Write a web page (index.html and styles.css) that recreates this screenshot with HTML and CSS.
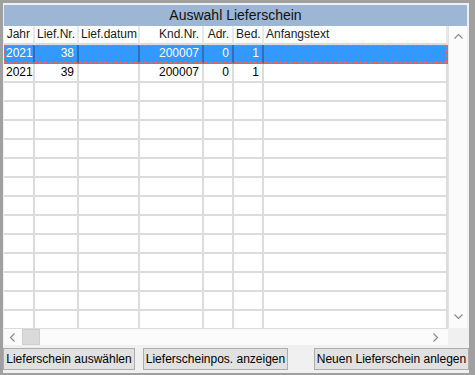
FILE: index.html
```html
<!DOCTYPE html>
<html lang="de">
<head>
  <meta charset="UTF-8" />
  <title>Auswahl Lieferschein</title>
  <link rel="stylesheet" href="styles.css">
</head>
<body>
  <div class="fenster">
    <div class="titel">Auswahl Lieferschein</div>

    <div class="liste">
      <div class="tabelle">
        <div class="zeile kopf">
          <div class="zelle c-jahr num">Jahr</div>
          <div class="zelle c-nr num">Lief.Nr.</div>
          <div class="zelle c-dat">Lief.datum</div>
          <div class="zelle c-knd num">Knd.Nr.</div>
          <div class="zelle c-adr num">Adr.</div>
          <div class="zelle c-bed num">Bed.</div>
          <div class="zelle c-text">Anfangstext</div>
        </div>
        <div class="zeile gewaehlt">
          <div class="zelle c-jahr num">2021</div>
          <div class="zelle c-nr num">38</div>
          <div class="zelle c-dat"></div>
          <div class="zelle c-knd num">200007</div>
          <div class="zelle c-adr num">0</div>
          <div class="zelle c-bed num">1</div>
          <div class="zelle c-text"></div>
        </div>
        <div class="zeile">
          <div class="zelle c-jahr num">2021</div>
          <div class="zelle c-nr num">39</div>
          <div class="zelle c-dat"></div>
          <div class="zelle c-knd num">200007</div>
          <div class="zelle c-adr num">0</div>
          <div class="zelle c-bed num">1</div>
          <div class="zelle c-text"></div>
        </div>
        <div class="zeile"><div class="zelle c-jahr"></div><div class="zelle c-nr"></div><div class="zelle c-dat"></div><div class="zelle c-knd"></div><div class="zelle c-adr"></div><div class="zelle c-bed"></div><div class="zelle c-text"></div></div>
        <div class="zeile"><div class="zelle c-jahr"></div><div class="zelle c-nr"></div><div class="zelle c-dat"></div><div class="zelle c-knd"></div><div class="zelle c-adr"></div><div class="zelle c-bed"></div><div class="zelle c-text"></div></div>
        <div class="zeile"><div class="zelle c-jahr"></div><div class="zelle c-nr"></div><div class="zelle c-dat"></div><div class="zelle c-knd"></div><div class="zelle c-adr"></div><div class="zelle c-bed"></div><div class="zelle c-text"></div></div>
        <div class="zeile"><div class="zelle c-jahr"></div><div class="zelle c-nr"></div><div class="zelle c-dat"></div><div class="zelle c-knd"></div><div class="zelle c-adr"></div><div class="zelle c-bed"></div><div class="zelle c-text"></div></div>
        <div class="zeile"><div class="zelle c-jahr"></div><div class="zelle c-nr"></div><div class="zelle c-dat"></div><div class="zelle c-knd"></div><div class="zelle c-adr"></div><div class="zelle c-bed"></div><div class="zelle c-text"></div></div>
        <div class="zeile"><div class="zelle c-jahr"></div><div class="zelle c-nr"></div><div class="zelle c-dat"></div><div class="zelle c-knd"></div><div class="zelle c-adr"></div><div class="zelle c-bed"></div><div class="zelle c-text"></div></div>
        <div class="zeile"><div class="zelle c-jahr"></div><div class="zelle c-nr"></div><div class="zelle c-dat"></div><div class="zelle c-knd"></div><div class="zelle c-adr"></div><div class="zelle c-bed"></div><div class="zelle c-text"></div></div>
        <div class="zeile"><div class="zelle c-jahr"></div><div class="zelle c-nr"></div><div class="zelle c-dat"></div><div class="zelle c-knd"></div><div class="zelle c-adr"></div><div class="zelle c-bed"></div><div class="zelle c-text"></div></div>
        <div class="zeile"><div class="zelle c-jahr"></div><div class="zelle c-nr"></div><div class="zelle c-dat"></div><div class="zelle c-knd"></div><div class="zelle c-adr"></div><div class="zelle c-bed"></div><div class="zelle c-text"></div></div>
        <div class="zeile"><div class="zelle c-jahr"></div><div class="zelle c-nr"></div><div class="zelle c-dat"></div><div class="zelle c-knd"></div><div class="zelle c-adr"></div><div class="zelle c-bed"></div><div class="zelle c-text"></div></div>
        <div class="zeile"><div class="zelle c-jahr"></div><div class="zelle c-nr"></div><div class="zelle c-dat"></div><div class="zelle c-knd"></div><div class="zelle c-adr"></div><div class="zelle c-bed"></div><div class="zelle c-text"></div></div>
        <div class="zeile"><div class="zelle c-jahr"></div><div class="zelle c-nr"></div><div class="zelle c-dat"></div><div class="zelle c-knd"></div><div class="zelle c-adr"></div><div class="zelle c-bed"></div><div class="zelle c-text"></div></div>
        <div class="zeile"><div class="zelle c-jahr"></div><div class="zelle c-nr"></div><div class="zelle c-dat"></div><div class="zelle c-knd"></div><div class="zelle c-adr"></div><div class="zelle c-bed"></div><div class="zelle c-text"></div></div>
      </div>

      <div class="vscroll">
        <svg class="pfeil" width="19" height="17" viewBox="0 0 19 17"><polyline points="5.5,10.5 9.5,6.5 13.5,10.5" /></svg>
        <svg class="pfeil" width="19" height="17" viewBox="0 0 19 17"><polyline points="5.5,6.5 9.5,10.5 13.5,6.5" /></svg>
      </div>
    </div>

    <div class="hzeile">
      <div class="hscroll">
        <svg class="pfeil" width="17" height="17" viewBox="0 0 17 17"><polyline points="10.5,4.5 6.5,8.5 10.5,12.5" /></svg>
        <div class="daumen"></div>
        <div class="luecke"></div>
        <svg class="pfeil" width="17" height="17" viewBox="0 0 17 17"><polyline points="6.5,4.5 10.5,8.5 6.5,12.5" /></svg>
      </div>
      <div class="ecke"></div>
    </div>

    <div class="knoepfe">
      <button class="btn btn-waehlen">Lieferschein auswählen</button>
      <button class="btn btn-pos">Lieferscheinpos. anzeigen</button>
      <button class="btn btn-neu">Neuen Lieferschein anlegen</button>
    </div>
  </div>
</body>
</html>
```

FILE: styles.css
```css
body {
  margin: 0;
  background: #a0a0a0;
  font-family: 'Liberation Sans', Arial, sans-serif;
  font-size: 12px;
  color: #000;
}

.fenster {
  width: 466px;
  height: 370px;
  margin: 3px 0 0 3px;
  background: #f0f0f0;
  padding-top: 2px;
  box-sizing: border-box;
}

.titel {
  margin: 0 2px 0 1px;
  height: 21px;
  line-height: 21px;
  background: #9db6d4;
  text-align: center;
  font-size: 14px;
  color: #111;
}

.liste {
  display: flex;
  margin: 0 2px 0 1px;
  height: 302px;
  background: #fff;
  overflow: hidden;
}

.tabelle {
  width: 444px;
}

.zeile {
  display: flex;
  height: 19px;
}

.zelle {
  box-sizing: border-box;
  height: 19px;
  line-height: 17px;
  padding: 0 3px 0 2px;
  border-right: 2px solid #dcdcdc;
  border-bottom: 2px solid #dcdcdc;
  white-space: nowrap;
  overflow: hidden;
}

.num { text-align: right; }

.c-jahr { width: 31px; }
.c-nr { width: 44px; }
.c-dat { width: 61px; }
.c-knd { width: 64px; }
.c-adr { width: 30px; }
.c-bed { width: 30px; }
.c-text { width: 184px; }

.kopf .zelle {
  border-right-color: #e8e8e8;
  color: #1a1a1a;
}

.gewaehlt {
  position: relative;
}

/* Fokusrahmen */
.gewaehlt::after {
  content: '';
  position: absolute;
  top: 0;
  left: 0;
  right: 1px;
  bottom: 1px;
  border: 1px dashed #f26a4b;
}

.gewaehlt .zelle {
  background: #3399ff;
  color: #fff;
  border-right-color: #2f6fb4;
  border-bottom-color: #3399ff;
}

.gewaehlt .c-text {
  border-right-color: #3399ff;
}

.vscroll {
  width: 19px;
  border-left: 1px solid #e2e2e2;
  background: #fbfbfb;
  display: flex;
  flex-direction: column;
  justify-content: space-between;
  padding: 2px 0 3px;
  box-sizing: border-box;
}

.pfeil {
  display: block;
  flex: none;
}

.pfeil polyline {
  fill: none;
  stroke: #8a8a8a;
  stroke-width: 1.2;
}

.hzeile {
  display: flex;
  margin: 0 2px 0 1px;
  height: 17px;
}

.hscroll {
  flex: 1;
  display: flex;
  align-items: center;
  background: #fbfbfb;
  border-top: 1px solid #dcdcdc;
  padding-right: 4px;
}

.daumen {
  width: 18px;
  height: 16px;
  margin-left: 1px;
  background: #dadada;
  border: 1px solid #cfcfcf;
  box-sizing: border-box;
}

.luecke { flex: 1; }

.ecke {
  width: 19px;
  background: #f0f0f0;
}

.knoepfe {
  display: flex;
  padding-top: 3px;
}

.btn {
  height: 22px;
  padding: 0;
  background: #e1e1e1;
  border: 1px solid #adadad;
  font-family: 'Liberation Sans', Arial, sans-serif;
  font-size: 12px;
  color: #000;
}

.btn-waehlen { width: 132px; }

.btn-pos {
  width: 145px;
  margin-left: 8px;
}

.btn-neu {
  width: 155px;
  margin-left: auto;
}
```
